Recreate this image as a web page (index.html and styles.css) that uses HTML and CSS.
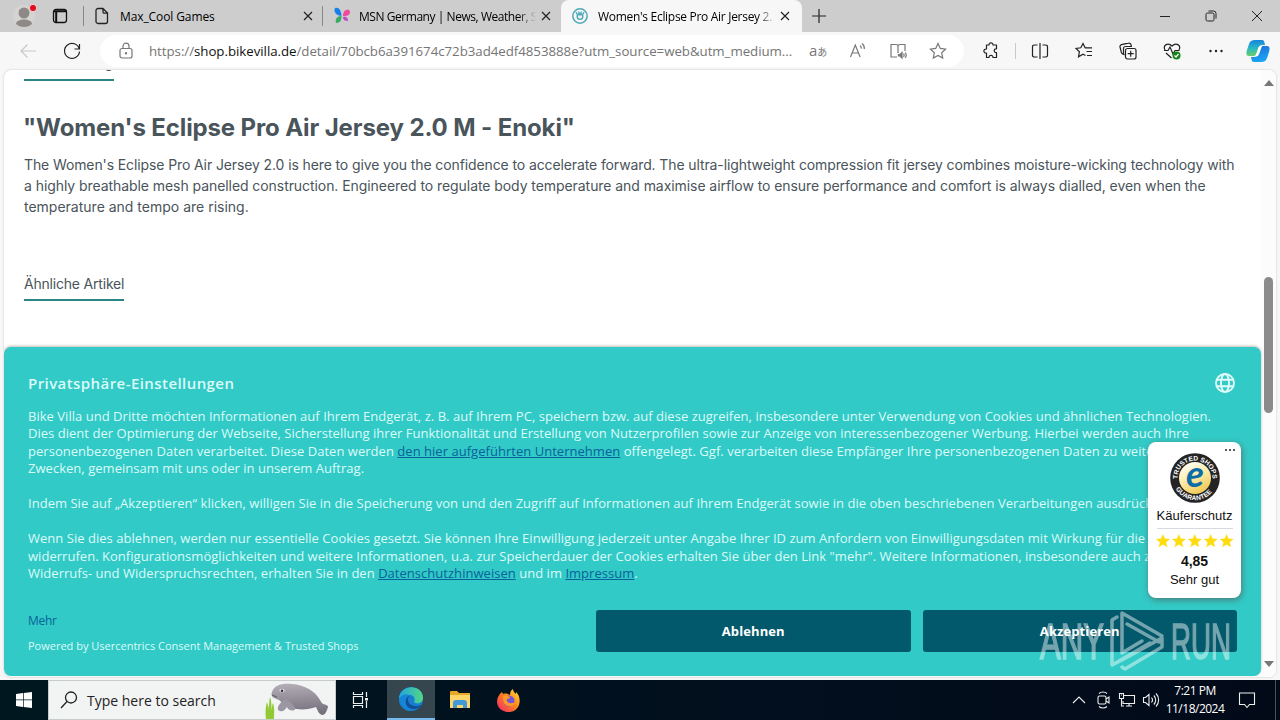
FILE: index.html
```html
<!DOCTYPE html>
<html lang="de">
<head>
  <meta charset="UTF-8">
  <meta name="viewport" content="width=device-width, initial-scale=1.0">
  <title>Women's Eclipse Pro Air Jersey 2.0</title>
  <link rel="stylesheet" href="styles.css">
</head>
<body>
  <header class="tabs">
    <div class="tabs-left">
      <svg class="profile" width="24" height="26" viewBox="0 0 24 26"><circle cx="11" cy="13" r="11" fill="#d6d4d3"/><circle cx="11" cy="10" r="5.5" fill="#8e8987"/><path d="M3 21c0-6 16-6 16 0-4 4-12 4-16 0z" fill="#8e8987"/><circle cx="20" cy="5" r="3.6" fill="#e00b1c" stroke="#e8d4d4"/></svg>
      <svg width="16" height="16" viewBox="0 0 16 16" fill="none" stroke="#111" stroke-width="1.3"><rect x="1.5" y="1.5" width="13" height="13" rx="2.5"/><path d="M2 3.2h12M4.2 4v10" stroke-width="2"/></svg>
    </div>
    <div class="tab">
      <svg width="16" height="18" viewBox="0 0 16 18" fill="none" stroke="#222" stroke-width="1.3"><path d="M4 1.5h5l4.500 4.500v8.500a2 2 0 0 1-2 2H4a2 2 0 0 1-2-2v-11a2 2 0 0 1 2-2zM9 1.500v3.500a1.200 1.200 0 0 0 1.200 1.200h3.300"/></svg>
      <span class="tab-title first-title">Max_Cool Games</span>
      <svg class="close" viewBox="0 0 10 10"><path d="M1 1l8 8M9 1l-8 8"/></svg>
    </div>
    <div class="tab">
      <svg width="18" height="18" viewBox="0 0 18 18"><path d="M2 1c4-1 6 2 6.500 8C4 9 0 5 2 1z" fill="#1480e8"/><path d="M3 16c-1-4 1-7 5.500-7 0 4-1 7-5.500 7z" fill="#36ab62"/><path d="M10 9c0-4 2-7 6-6 3 3-1 7-6 6z" fill="#ef4b9d"/><path d="M10 10c3-1 5 0 5 4-3 0-5-1-5-4z" fill="#be4bc8"/></svg>
      <span class="tab-title fade msn-title">MSN Germany | News, Weather, S</span>
      <svg class="close" viewBox="0 0 10 10"><path d="M1 1l8 8M9 1l-8 8"/></svg>
    </div>
    <div class="tab active">
      <svg width="18" height="18" viewBox="0 0 18 18" fill="none" stroke="#4da9b8"><circle cx="9" cy="9" r="7.200" stroke-width="1.500"/><path d="M5 5l2 4M13 5l-2 4M7.500 4.500L9 8l1.500-3.500" stroke-width="1.300"/><circle cx="9" cy="9.600" r="2.800" stroke-width="1.400"/></svg>
      <span class="tab-title fade jersey-title">Women's Eclipse Pro Air Jersey 2.</span>
      <svg class="close" viewBox="0 0 10 10"><path d="M1 1l8 8M9 1l-8 8"/></svg>
    </div>
    <svg class="plus" width="14" height="14" viewBox="0 0 14 14" stroke="#222" stroke-width="1.200"><path d="M7 0v14M0 7h14"/></svg>
    <div class="window-buttons">
      <svg width="12" height="12" viewBox="0 0 12 12"><path d="M1 6.500h10"/></svg>
      <svg width="12" height="12" viewBox="0 0 12 12"><rect x="1" y="3" width="8" height="8" rx="1.500"/><path d="M3.500 1h5A2.500 2.500 0 0 1 11 3.500v5"/></svg>
      <svg width="12" height="12" viewBox="0 0 12 12"><path d="M1 1l10 10M11 1L1 11"/></svg>
    </div>
  </header>

  <nav class="toolbar">
    <svg class="back" width="18" height="18" viewBox="0 0 18 18"><path d="M17 9H2M8.500 2.500L2 9l6.500 6.500"/></svg>
    <svg class="reload" width="20" height="20" viewBox="0 0 20 20"><path d="M17.300 8A7.500 7.500 0 1 0 17.500 10.500M17.500 3v5h-5"/></svg>
    <div class="address">
      <svg class="lock" width="16" height="18" viewBox="0 0 16 18"><rect x="2" y="6.500" width="12" height="9.500" rx="2"/><path d="M5 6.500V4.200a3 3 0 0 1 6 0v2.300"/><circle cx="8" cy="11.300" r=".6"/></svg>
      <span class="url">https://<b>shop.bikevilla.de</b>/detail/70bcb6a391674c72b3ad4edf4853888e?utm_source=web&amp;utm_medium...</span>
      <span class="translate">a<small>あ</small></span>
      <svg class="read" width="18" height="18" viewBox="0 0 18 18"><path d="M1.500 15L6.300 3l4.800 12M3 11h6.500M11 3.500c1 .8 1.500 2 1.300 3.200M13 1.500c2 1.500 2.500 3.500 2.300 5.500"/></svg>
      <svg class="book" width="18" height="18" viewBox="0 0 18 18"><path d="M8 15H2V2.500h5c1.200 0 2 .7 2 1.500v7M9 4c0-.8.800-1.500 2-1.500h5V9"/><path d="M9.500 12.500h1.500l2-2v5.500l-2-2H9.500z" fill="#777"/><path d="M14.500 11.500c.7 1 .7 2.500 0 3.500M16.200 10.500c1.200 1.700 1.200 4 0 5.500"/></svg>
      <svg class="star" width="18" height="18" viewBox="0 0 18 18"><path d="M9 1.500l2.300 4.900 5.300.7-3.900 3.700 1 5.300L9 13.500l-4.700 2.600 1-5.300L1.400 7.100l5.300-.7z"/></svg>
    </div>
    <div class="tools">
      <svg width="20" height="20" viewBox="0 0 20 20"><path d="M5.500 4H8c-.2-2.800 4.200-2.800 4 0h3.500v3.800c-3-.5-3 4.200 0 3.900V16.500H12c.2-2.800-4.200-2.800-4 0H5.500v-4.300c-3.500.4-3.500-4.600 0-4.200z" stroke-linejoin="round"/></svg>
      <i class="divider"></i>
      <svg width="18" height="18" viewBox="0 0 18 18"><path d="M6.500 3H3.200A1.700 1.700 0 0 0 1.500 4.700v8.600A1.700 1.700 0 0 0 3.200 15h3.300M11.500 3h3.300a1.700 1.700 0 0 1 1.700 1.700v8.600a1.700 1.700 0 0 1-1.700 1.700h-3.300M9 1v16"/></svg>
      <svg width="18" height="18" viewBox="0 0 18 18"><path d="M10.500 13.500L8 12.300l-4.500 2.500.9-5L1 6.500l4.800-.7L8 1.500l2.200 4.300H17M11.500 9.500H17M12 13.500h5"/></svg>
      <svg width="18" height="18" viewBox="0 0 18 18"><path d="M4.500 12.500L2.500 11 1 5a2 2 0 0 1 1.500-2.400l7-1.500A2 2 0 0 1 12 2.800l.3 1.200M5.500 13a2 2 0 0 1-1-1.700V6.500A2 2 0 0 1 6.500 4.500H13"/><rect x="6.500" y="6.500" width="10.500" height="10.500" rx="2"/><path d="M11.700 8.700v6M8.700 11.700h6"/></svg>
      <svg width="18" height="18" viewBox="0 0 18 18"><path d="M2 8C-.5 3 5 0 9 4c4-4 9.500-1 7 4M1 8.500h4l2-3.500 3 7 2-3.500h4.500M3 11l5.500 5"/><circle cx="13.500" cy="13.500" r="4" fill="#16831b" stroke="none"/><path d="M11.500 13.500l1.500 1.500 2.500-3" stroke="#fff"/></svg>
      <svg width="18" height="18" viewBox="0 0 18 18"><g fill="#222" stroke="none"><circle cx="3.500" cy="9" r="1.200"/><circle cx="9" cy="9" r="1.200"/><circle cx="14.500" cy="9" r="1.200"/></g></svg>
      <svg class="copilot" width="24" height="24" viewBox="0 0 24 24">
        <defs><linearGradient id="cp1" x2="0" y2="1"><stop offset="0" stop-color="#1883dc"/><stop offset=".5" stop-color="#28b7c6"/><stop offset="1" stop-color="#69ce68"/></linearGradient><linearGradient id="cp2" x2=".3" y2="1"><stop offset="0" stop-color="#236bd5"/><stop offset="1" stop-color="#18a5f4"/></linearGradient></defs>
        <g stroke="none"><path d="M9 1h7c2 0 2.500 2 3 5h-3c-2 0-3 1-4 4l-1.500 4c-1 3-2 3-4 3H3c-3 0-3-3-2-6l2-6c1-3 3-4 6-4z" fill="url(#cp1)"/><path d="M15 23H8c-2 0-2.500-2-3-5h3c2 0 3-1 4-4l1.500-4c1-3 2-3 4-3H21c3 0 3 3 2 6l-2 6c-1 3-3 4-6 4z" fill="url(#cp2)"/><path d="M12 10c.7-2 1.600-3 3-3h1l-2.500 7c-.8 2-1.500 3.500-3.500 3.500H9c1-.8 1.500-2 1.800-3.200z" fill="#fff"/></g>
      </svg>
    </div>
  </nav>

  <div class="frame">
    <main class="page">
      <div class="tab-label cut"><span>Beschreibung</span></div>
      <h1>"Women's Eclipse Pro Air Jersey 2.0 M - Enoki"</h1>
      <p class="description"><span class="d1">The Women's Eclipse Pro Air Jersey 2.0 is here to give you the confidence to accelerate forward. The ultra-lightweight compression fit jersey combines moisture-wicking technology with</span><br><span class="d2">a highly breathable mesh panelled construction. Engineered to regulate body temperature and maximise airflow to ensure performance and comfort is always dialled, even when the</span><br><span class="d3">temperature and tempo are rising.</span></p>
      <div class="tab-label similar">Ähnliche Artikel</div>

      <section class="consent">
        <div class="consent-head">
          <h2>Privatsphäre-Einstellungen</h2>
          <svg width="22" height="22" viewBox="0 0 22 22" fill="none" stroke="#dffafa" stroke-width="1.900"><circle cx="11" cy="11" r="9"/><ellipse cx="11" cy="11" rx="4" ry="9"/><path d="M3 7.700h16M3 14.300h16"/></svg>
        </div>
        <div class="consent-text">
          <p>Bike Villa und Dritte möchten Informationen auf Ihrem Endgerät, z. B. auf Ihrem PC, speichern bzw. auf diese zugreifen, insbesondere unter Verwendung von Cookies und ähnlichen Technologien.<br>Dies dient der Optimierung der Webseite, Sicherstellung ihrer Funktionalität und Erstellung von Nutzerprofilen sowie zur Anzeige von interessenbezogener Werbung. Hierbei werden auch Ihre<br>personenbezogenen Daten verarbeitet. Diese Daten werden <a>den hier aufgeführten Unternehmen</a> offengelegt. Ggf. verarbeiten diese Empfänger Ihre personenbezogenen Daten zu weiteren<br>Zwecken, gemeinsam mit uns oder in unserem Auftrag.</p>
          <p>Indem Sie auf „Akzeptieren“ klicken, willigen Sie in die Speicherung von und den Zugriff auf Informationen auf Ihrem Endgerät sowie in die oben beschriebenen Verarbeitungen ausdrücklich</p>
          <p>Wenn Sie dies ablehnen, werden nur essentielle Cookies gesetzt. Sie können Ihre Einwilligung jederzeit unter Angabe Ihrer ID zum Anfordern von Einwilligungsdaten mit Wirkung für die<br>widerrufen. Konfigurationsmöglichkeiten und weitere Informationen, u.a. zur Speicherdauer der Cookies erhalten Sie über den Link "mehr". Weitere Informationen, insbesondere auch zu<br>Widerrufs- und Widerspruchsrechten, erhalten Sie in den <a>Datenschutzhinweisen</a> und im <a>Impressum</a>.</p>
        </div>
        <div class="consent-foot">
          <div class="credits"><span class="more">Mehr</span><span class="powered">Powered by Usercentrics Consent Management &amp; Trusted Shops</span></div>
          <button>Ablehnen</button>
          <button>Akzeptieren</button>
        </div>
      </section>

      <aside class="trust">
        <svg class="dots" width="12" height="4" viewBox="0 0 12 4" fill="#333"><circle cx="2" cy="2" r="1.100"/><circle cx="6" cy="2" r="1.100"/><circle cx="10" cy="2" r="1.100"/></svg>
        <svg width="50" height="50" viewBox="0 0 50 50">
          <defs><linearGradient id="gold" x1=".2" x2=".7" y2="1"><stop offset="0" stop-color="#fff"/><stop offset=".4" stop-color="#fdf0b8"/><stop offset="1" stop-color="#f0c64e"/></linearGradient><path id="arcTop" d="M7.600 27A17.500 17.500 0 1 1 42.400 27"/><path id="arcBottom" d="M3.800 31A22 22 0 0 0 46.200 31"/></defs>
          <circle cx="25" cy="25" r="24.800" fill="#242425"/><circle cx="25" cy="25" r="16" fill="url(#gold)"/>
          <text class="seal-text"><textPath href="#arcTop" startOffset="1" textLength="56">TRUSTED SHOPS</textPath></text>
          <text class="seal-text"><textPath href="#arcBottom" startOffset="5" textLength="43">GUARANTEE</textPath></text>
          <text class="seal-e" x="25" y="34" text-anchor="middle">e</text>
        </svg>
        <span class="protection">Käuferschutz</span>
        <hr>
        <span class="stars"><svg width="78" height="16" viewBox="0 0 78 16" fill="#ffdc0f"><defs><path id="rate" d="M7 1l1.900 4.600 5.100.3-3.900 3.300 1.300 5L7 11.500 2.600 14.200l1.300-5L0 5.900l5.100-.3z"/></defs><use href="#rate"/><use href="#rate" x="15.900"/><use href="#rate" x="31.800"/><use href="#rate" x="47.700"/><use href="#rate" x="63.600"/></svg></span>
        <b>4,85</b>
        <span>Sehr gut</span>
      </aside>
    </main>
    <div class="scrollbar">
      <svg width="10" height="6" viewBox="0 0 10 6"><path d="M0 6l5-6 5 6z"/></svg>
      <div class="thumb"></div>
      <svg width="10" height="6" viewBox="0 0 10 6"><path d="M0 0l5 6 5-6z"/></svg>
    </div>
  </div>

  <footer class="taskbar">
    <div class="task start"><svg width="16" height="16" viewBox="0 0 16 16" fill="#fff"><path d="M0 2l7-1v6.500H0zM7.700.900L16 0v7.500H7.700zM0 8.300h7V15l-7-1zM7.700 8.300H16V16l-8.300-1z"/></svg></div>
    <div class="search">
      <svg width="18" height="18" viewBox="0 0 18 18" fill="none" stroke="#222" stroke-width="1.300"><circle cx="11" cy="6.500" r="5.500"/><path d="M7 10.500L1 17"/></svg>
      <span>Type here to search</span>
      <svg class="manatee" width="66" height="38" viewBox="0 0 66 38">
        <defs><linearGradient id="skin" x2=".1" y2="1"><stop offset="0" stop-color="#b5afb9"/><stop offset="1" stop-color="#75707c"/></linearGradient></defs>
        <path d="M2 38c-1-8 0-13 1-17 1 4 2 5 2 8 0-5 0-9 1-13 2 5 1 9 2 13 0-3 0-5 1-7 2 6 1 11 1 16z" fill="#91ca35"/>
        <path d="M8 11C10 4 18 2 28 3c13 1 23 7 28 16 1 2 2 3 3 4 3 1 5 1 5 3-1 3-2 7-5 8-4 0-5-4-7-8-8 3-17 3-25 1-4-1-8-5-12-8-5-2-9-3-7-8z" fill="url(#skin)"/><path d="M21 18c-4 3-8 7-7 11 4 3 7 0 9-3 1 3 4 4 8 3 0-4-3-8-10-11z" fill="#9b96a2"/><ellipse cx="18" cy="9.500" rx="2.500" ry="1.700" fill="#eee"/><circle cx="18" cy="9.700" r="1.300" fill="#292638"/><path d="M8 14l5 2" stroke="#615b67"/>
      </svg>
    </div>
    <div class="task"><svg width="18" height="18" viewBox="0 0 18 18" fill="none" stroke="#eee" stroke-width="1.200"><path d="M1.500 1v2.500h9V1M1.500 17v-2.500h9V17M1.500 5.500h9v7h-9zM14.500 1v5M14.500 10v7"/><path d="M13 7h3v2.500h-3z" fill="#eee" stroke="none"/></svg></div>
    <div class="task current"><svg width="26" height="26" viewBox="0 0 26 26"><defs><linearGradient id="eg"><stop offset="0" stop-color="#22a3e5"/><stop offset="1" stop-color="#52d782"/></linearGradient></defs><circle cx="13" cy="13" r="12" fill="#177ed0"/><path d="M1 13C1-2 25-3 25 12c0 5-6 7-9 4 2-4-1-7-4-7-5-1-8 1-11 4z" fill="url(#eg)"/><path d="M10 10c-6 6 0 16 10 12 2-1 3-2 3-3-6 3-12 0-13-4-.5-2 0-4 2-5z" fill="#114d98"/><path d="M1 13c2-4 7-6 11-3-6 1-7 9 1 15-7 0-12-6-12-12z" fill="#1386d8"/></svg></div>
    <div class="task explorer"><svg width="22" height="20" viewBox="0 0 22 20"><path d="M1 2c0-1 1-1 1-1h6l2 2h11v15H1z" fill="#e8a727"/><path d="M1 5h20v13H1z" fill="#ffd56a"/><path d="M4 18v-5c0-2 1-3 3-3h8c2 0 3 1 3 3v5h-4v-3H8v3z" fill="#409ad8"/></svg></div>
    <div class="task firefox"><svg width="24" height="24" viewBox="0 0 24 24"><defs><linearGradient id="fx" x1="1" x2="0" y2="1"><stop offset="0" stop-color="#ffe43c"/><stop offset=".45" stop-color="#ff851b"/><stop offset="1" stop-color="#f32170"/></linearGradient></defs><path d="M5 4l1 2c3-1 5 0 7 1 0-3 1-5 3-6 0 2 1 3 3 5V4c6 5 5 19-6 20C-2 24-3 10 5 4z" fill="url(#fx)"/><circle cx="12" cy="13" r="5.500" fill="#7355d8"/><path d="M6 8c3-2 5 0 7 1 0 1-1 2-3 2-1 2 1 5 5 4 1 0 2 0 3-1-1 4-4 5-7 4-4-1-5-4-5-10z" fill="#ff9824"/></svg></div>
    <div class="tray">
      <svg width="16" height="16" viewBox="0 0 16 16"><path d="M2 11l6-6 6 6"/></svg>
      <svg width="16" height="18" viewBox="0 0 16 18"><rect x="3" y="5" width="8" height="8" rx="1.500"/><path d="M11 8l3-2v6l-3-2M4 2.500c2-2 6-2 8 0M4 15.500c2 2 6 2 8 0"/></svg>
      <svg class="network" width="18" height="16" viewBox="0 0 18 16"><path d="M6 3.500h10.500v8H5V9M11 11.500V14M8 14h6M3.500 6v8H6M1.500 1.500h4v5h-4zM3 3h1"/></svg>
      <svg class="volume" width="18" height="16" viewBox="0 0 18 16"><path d="M1.500 5.500h2L7 2.500v11l-3.500-3h-2zM9.500 5.500c1.300 1.500 1.300 3.500 0 5M11.800 3.500c2.500 2.500 2.500 6.500 0 9M14 1.500c3.500 3.500 3.500 9.500 0 13"/></svg>
      <div class="clock"><span>7:21 PM</span><span>11/18/2024</span></div>
      <svg class="notice" width="18" height="18" viewBox="0 0 18 18"><path d="M1.500 2h15v11.500h-5L9 16.500l-2.500-3h-5z"/></svg>
      <i></i>
    </div>
  </footer>

  <svg class="watermark" width="194" height="66" viewBox="0 0 194 66">
    <text x="1" y="51" textLength="64" lengthAdjust="spacingAndGlyphs">ANY</text>
    <path d="M78 9l-5 3v45l38-22M83 45V5l40 23-3 6-32-18M83 45l20-12M73 57l10-5 40-22v9L86 61l-3-2"/>
    <text x="132" y="51" textLength="60" lengthAdjust="spacingAndGlyphs">RUN</text>
  </svg>
</body>
</html>
```
FILE: styles.css
```css
* {
  box-sizing: border-box;
  margin: 0;
  padding: 0;
}

body {
  width: 1280px;
  height: 720px;
  overflow: hidden;
  display: flex;
  flex-direction: column;
  position: relative;
  background: #f7f7f7;
  font-family: "Open Sans", "Noto Sans CJK JP", sans-serif;
}

svg {
  display: block;
  flex: none;
}

.tabs {
  height: 32px;
  flex: none;
  display: flex;
  align-items: center;
  background: #cdcdcd;
}

.tabs-left {
  width: 84px;
  height: 20px;
  padding-left: 13px;
  display: flex;
  align-items: center;
  gap: 15px;
  border-right: 1px solid #888;
}

.tab {
  width: 239px;
  height: 20px;
  display: flex;
  align-items: center;
  padding: 0 9px 0 10px;
  border-right: 1px solid #888;
  font-size: 12px;
}

.tab:nth-child(3) {
  width: 238px;
  padding-right: 10px;
  border: 0;
}

.tab.active {
  width: 241px;
  height: 32px;
  background: #f7f7f7;
  border: 0;
  border-radius: 8px 8px 0 0;
  padding-right: 12px;
}

.tab-title {
  margin-left: 9px;
  width: 177px;
  overflow: hidden;
  white-space: nowrap;
  flex: none;
}

.first-title {
  margin-left: 10px;
  letter-spacing: -.1px;
}

.msn-title {
  margin-left: 8px;
  letter-spacing: -.45px;
}

.jersey-title {
  letter-spacing: -.3px;
}

.fade {
  -webkit-mask-image: linear-gradient(90deg, #000 90%, transparent);
  mask-image: linear-gradient(90deg, #000 90%, transparent);
}

.close {
  width: 10px;
  height: 10px;
  margin-left: auto;
  stroke: #222;
  stroke-width: 1.2;
}

.plus {
  margin-left: 10px;
}

.window-buttons {
  margin-left: auto;
  margin-right: 17px;
  display: flex;
  gap: 34px;
  fill: none;
  stroke: #222;
}

.toolbar {
  height: 38px;
  flex: none;
  display: flex;
  align-items: center;
  fill: none;
  stroke: #222;
  stroke-width: 1.2;
}

.back {
  margin-left: 19px;
  stroke: #c8c8c8;
}

.reload {
  margin-left: 25px;
}

.address {
  margin-left: 18px;
  width: 864px;
  height: 32px;
  display: flex;
  align-items: center;
  background: #fff;
  border-radius: 16px;
  stroke: #777;
}

.lock {
  margin-left: 18px;
}

.url {
  width: 650px;
  margin-left: 15px;
  white-space: nowrap;
  font-size: 13.3px;
  letter-spacing: -.045px;
  color: #757575;
}

.url b {
  font-weight: 400;
  color: #111;
}

.translate {
  width: 26px;
  margin-left: 10px;
  font-size: 15px;
  line-height: 15px;
  color: #777;
  white-space: nowrap;
}

.translate small {
  font-size: 10px;
}

.read {
  margin-left: 14px;
}

.book,
.star {
  margin-left: 22px;
}

.tools {
  display: flex;
  align-items: center;
  margin-left: 17px;
  gap: 26px;
}

.tools > svg:first-child {
  margin-right: -12px;
}

.divider {
  width: 1px;
  height: 16px;
  margin-right: -11px;
  background: #c9c9c9;
}

.copilot {
  margin-left: -5px;
}

.frame {
  height: 607px;
  flex: none;
  margin: 0 4px 3px;
  display: flex;
  background: #fff;
  border-radius: 7px;
  box-shadow: 0 0 2px #bbb;
  overflow: hidden;
}

.page {
  width: 1257px;
  position: relative;
  padding-left: 20px;
  font-family: Inter, sans-serif;
  color: #4a545b;
}

.tab-label {
  width: 100px;
  height: 27px;
  border-bottom: 2px solid #2b8584;
  font-size: 14px;
  line-height: 20px;
  letter-spacing: -.2px;
  white-space: nowrap;
}

.cut {
  width: 90px;
  height: 11px;
  overflow: hidden;
  display: flex;
  align-items: flex-end;
}

.cut span {
  line-height: 21px;
  padding-bottom: 6px;
}

.page h1 {
  margin-top: 32px;
  margin-left: -1px;
  font-size: 24px;
  line-height: 30px;
  letter-spacing: -.12px;
  white-space: nowrap;
}

.description {
  margin-top: 11px;
  font-size: 14px;
  line-height: 21px;
  white-space: nowrap;
}

.d1 {
  letter-spacing: -.112px;
}

.d2 {
  letter-spacing: -.067px;
}

.similar {
  margin-top: 57px;
}

.consent {
  position: absolute;
  left: 0;
  bottom: 1px;
  width: 1257px;
  height: 329px;
  padding: 25px 25px 24px 24px;
  border-radius: 7px;
  background: #32cac6;
  box-shadow: 0 -1px 3px #c1bcb8;
  color: #dcfaf9;
  font-family: "Open Sans", sans-serif;
}

.consent-head {
  display: flex;
  justify-content: space-between;
  height: 36px;
}

.consent h2 {
  font-size: 15px;
  line-height: 22px;
  font-weight: 600;
  letter-spacing: .43px;
}

.consent-text {
  font-size: 13px;
  line-height: 17.45px;
  letter-spacing: .031px;
  white-space: nowrap;
}

.consent-text p + p {
  margin-top: 17.45px;
}

.consent a {
  color: #08629b;
  text-decoration: underline;
}

.consent-foot {
  height: 42px;
  margin-top: 27px;
  display: flex;
  gap: 12px;
}

.credits {
  width: 556px;
  flex: none;
  display: flex;
  flex-direction: column;
  gap: 9px;
  font-size: 11px;
  line-height: 16px;
  padding-top: 3px;
}

.more {
  font-size: 12px;
  letter-spacing: -.3px;
  color: #08629b;
}

.consent button {
  width: 314.5px;
  height: 42px;
  flex: none;
  border: 0;
  border-radius: 3px;
  background: #02596b;
  color: #fff;
  font: 700 13px "Open Sans", sans-serif;
  letter-spacing: .1px;
}

.trust {
  position: absolute;
  left: 1144px;
  top: 372px;
  width: 93px;
  height: 156px;
  padding-top: 11px;
  border-radius: 8px;
  background: #fff;
  box-shadow: 1px 2px 6px #497c7b;
  display: flex;
  flex-direction: column;
  align-items: center;
  color: #111;
  font-family: "Liberation Sans", sans-serif;
  font-size: 13px;
  line-height: 18px;
}

.dots {
  position: absolute;
  right: 5px;
  top: 6px;
}

.protection {
  margin-top: 4px;
}

.trust hr {
  width: 76px;
  border: 0;
  border-top: 1px solid #d8d8df;
  margin: 3px 0 4px;
}

.trust b {
  margin-top: 3px;
  font-size: 14px;
}

.trust b + span {
  margin-top: 1px;
}

.seal-text {
  font: 700 6.6px "Liberation Sans", sans-serif;
  fill: #fff;
}

.seal-e {
  font: italic 700 37px Lato, sans-serif;
  fill: #0d6da6;
}

.scrollbar {
  width: 15px;
  padding: 10px 0 10px;
  display: flex;
  flex-direction: column;
  align-items: center;
  background: #fcfcfc;
  fill: #777;
}

.thumb {
  width: 9px;
  height: 136px;
  margin-top: 191px;
  margin-bottom: auto;
  border-radius: 5px;
  background: #8b8b8b;
}

.taskbar {
  height: 40px;
  flex: none;
  display: flex;
  background: linear-gradient(90deg, #001720, #020e1d 65%, #020a18);
  color: #fff;
}

.task {
  width: 49px;
  display: flex;
  align-items: center;
  justify-content: center;
}

.start {
  width: 48px;
}

.search {
  width: 288px;
  display: flex;
  align-items: center;
  padding-left: 11px;
  background: #f2f3f3;
  border: 1px solid #c7cccc;
  color: #222;
  font-size: 14px;
}

.search span {
  margin-left: 9px;
}

.manatee {
  margin-left: auto;
  margin-right: 5px;
}

.current {
  width: 48px;
  margin-left: 2px;
  background: #35464f;
  border-bottom: 2px solid #76b9ed;
}

.tray {
  margin-left: auto;
  display: flex;
  align-items: center;
  gap: 8px;
  fill: none;
  stroke: #eee;
  stroke-width: 1.1;
}

.network {
  margin-left: -1px;
}

.volume {
  margin-left: -2px;
}

.clock {
  width: 62px;
  margin-left: -4px;
  display: flex;
  flex-direction: column;
  align-items: center;
  font-size: 12px;
  line-height: 18px;
  letter-spacing: -.5px;
}

.notice {
  margin-left: 4px;
}

.tray i {
  width: 1px;
  height: 40px;
  margin-left: 11px;
  margin-right: 4px;
  background: #47505a;
}

.watermark {
  position: absolute;
  left: 1039px;
  top: 608px;
  opacity: .45;
  fill: #fff;
  font: 50px "Liberation Sans", sans-serif;
}

.watermark text {
  stroke: #fff;
  stroke-width: 1.6;
}

.watermark path {
  fill: none;
  stroke: #fff;
  stroke-width: 3.5;
  stroke-linejoin: round;
  stroke-linecap: round;
}
```
